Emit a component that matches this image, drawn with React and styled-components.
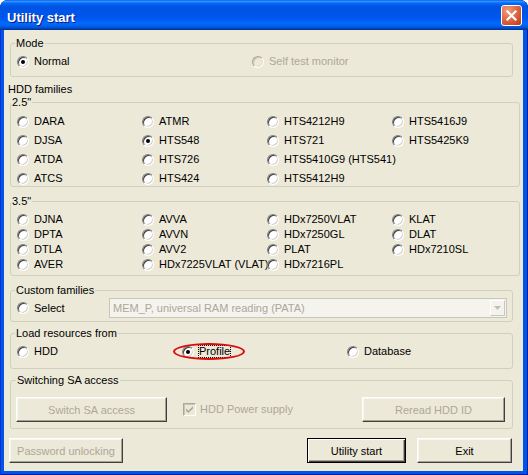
import React from 'react'
import styled, { createGlobalStyle, css } from 'styled-components'

const GlobalStyle = createGlobalStyle`
  html, body {
    margin: 0;
    padding: 0;
    background: #ffffff;
  }
  body {
    font-family: "Liberation Sans", Arial, sans-serif;
    font-size: 11px;
    color: #000;
  }
`

const family25 = [
  'DARA', 'ATMR', 'HTS4212H9', 'HTS5416J9',
  'DJSA', 'HTS548', 'HTS721', 'HTS5425K9',
  'ATDA', 'HTS726', 'HTS5410G9 (HTS541)', null,
  'ATCS', 'HTS424', 'HTS5412H9', null,
]

const family35 = [
  'DJNA', 'AVVA', 'HDx7250VLAT', 'KLAT',
  'DPTA', 'AVVN', 'HDx7250GL', 'DLAT',
  'DTLA', 'AVV2', 'PLAT', 'HDx7210SL',
  'AVER', 'HDx7225VLAT (VLAT)', 'HDx7216PL', null,
]

const Radio = ({ label, checked, disabled, focused, children }) => (
  <Item $disabled={disabled}>
    <RadioCircle $checked={checked} $disabled={disabled} />
    <Label $focused={focused}>{label}</Label>
    {children}
  </Item>
)

const App = () => {
  return (
    <>
      <GlobalStyle />
      <Window>
        <TitleBar>
          <Title>Utility start</Title>
          <CloseBtn>
            <svg width="21" height="21" viewBox="0 0 21 21">
              <path d="M6.5 6.5 L14.5 14.5 M14.5 6.5 L6.5 14.5" stroke="#fff" strokeWidth="2.2" strokeLinecap="square" />
            </svg>
          </CloseBtn>
        </TitleBar>

        <Client>
          <Group $w={503}>
            <Legend $ml={4}>Mode</Legend>
            <GroupBody $pad="5px 0 8px 6px">
              <Grid $cols="235px 235px" $gap={0}>
                <Radio label="Normal" checked />
                <Radio label="Self test monitor" disabled />
              </Grid>
            </GroupBody>
          </Group>

          <Caption>HDD families</Caption>

          <Group $w={510}>
            <Legend $ml={0}>2.5"</Legend>
            <GroupBody $pad="6px 0 1px 6px">
              <Grid $cols="repeat(4, 125px)" $gap={6}>
                {family25.map((name, i) =>
                  name ? <Radio key={i} label={name} checked={name === 'HTS548'} /> : <span key={i} />
                )}
              </Grid>
            </GroupBody>
          </Group>

          <Group $w={510} $mt={8}>
            <Legend $ml={0}>3.5"</Legend>
            <GroupBody $pad="5px 0 4px 6px">
              <Grid $cols="repeat(4, 125px)" $gap={2}>
                {family35.map((name, i) =>
                  name ? <Radio key={i} label={name} /> : <span key={i} />
                )}
              </Grid>
            </GroupBody>
          </Group>

          <Group $w={503} $mt={8}>
            <Legend $ml={4}>Custom families</Legend>
            <GroupBody $pad="1px 5px 3px 6px">
              <Row>
                <SelectCell>
                  <Radio label="Select" />
                </SelectCell>
                <Combo>
                  <ComboText>MEM_P, universal RAM reading (PATA)</ComboText>
                  <ComboArrow>
                    <svg width="7" height="4" viewBox="0 0 7 4">
                      <path d="M0 0 H7 L3.5 4 Z" fill="#C2BFB0" />
                    </svg>
                  </ComboArrow>
                </Combo>
              </Row>
            </GroupBody>
          </Group>

          <Group $w={503} $mt={5}>
            <Legend $ml={4}>Load resources from</Legend>
            <GroupBody $pad="5px 0 10px 6px">
              <Grid $cols="165px 165px 165px" $gap={0}>
                <Radio label="HDD" />
                <Radio label="Profile" checked focused>
                  <Mark />
                </Radio>
                <Radio label="Database" />
              </Grid>
            </GroupBody>
          </Group>

          <Group $w={503} $mt={5}>
            <Legend $ml={5}>Switching SA access</Legend>
            <GroupBody $pad="10px 7px 6px 5px">
              <Row>
                <Button $w={151} disabled>Switch SA access</Button>
                <CheckItem>
                  <CheckBox>
                    <svg width="11" height="11" viewBox="0 0 11 11">
                      <path d="M2 4.5 L4.3 6.8 L9 2.2 V4.4 L4.3 9 L2 6.7 Z" fill="#ACA899" />
                    </svg>
                  </CheckBox>
                  <Label $disabled>HDD Power supply</Label>
                </CheckItem>
                <Spacer />
                <Button $w={143} disabled>Reread HDD ID</Button>
              </Row>
            </GroupBody>
          </Group>

          <Footer>
            <Button $w={114} disabled>Password unlocking</Button>
            <Spacer />
            <Button $w={99} $default>Utility start</Button>
            <Button $w={95}>Exit</Button>
          </Footer>
        </Client>
      </Window>
    </>
  )
}

const Window = styled.div`
  width: 528px;
  height: 475px;
  box-sizing: border-box;
  display: flex;
  flex-direction: column;
  background: #0055E5;
  border-radius: 8px 8px 0 0;
  padding-bottom: 4px;
  overflow: hidden;
  box-shadow: inset 1px 0 0 #0831D9, inset -1px 0 0 #001EA0, inset 0 -1px 0 #001EA0;
`
const TitleBar = styled.div`
  height: 30px;
  flex: none;
  display: flex;
  align-items: center;
  justify-content: space-between;
  padding: 0 6px 0 7px;
  box-sizing: border-box;
  border-radius: 8px 8px 0 0;
  background: linear-gradient(to bottom, #0058EE 0%, #3A93FF 4%, #288EFF 6%, #127DFF 8%, #036FFC 10%, #0262EE 14%, #0057E5 20%, #0054E3 24%, #0055EB 56%, #005BF5 66%, #026AFE 76%, #0062EF 86%, #0052D6 92%, #0040AB 96%, #003092 100%);
`
const Title = styled.span`
  font-family: "Liberation Sans", Arial, sans-serif;
  font-weight: bold;
  font-size: 13px;
  color: #ffffff;
  text-shadow: 1px 1px 0 #0A1883;
  padding-top: 4px;
`
const CloseBtn = styled.span`
  width: 21px;
  height: 21px;
  box-sizing: border-box;
  border: 1px solid #ffffff;
  border-radius: 3px;
  display: flex;
  align-items: center;
  justify-content: center;
  margin-top: 1px;
  background: radial-gradient(circle at 30% 25%, #F09B7E 0%, #E3704C 40%, #CB4A26 80%, #B53815 100%);
  svg { display: block; margin: -1px; }
`
const Client = styled.div`
  flex: 1;
  margin: 0 5px 0 4px;
  background: #ECE9D8;
  padding: 7px 0 0 6px;
  display: flex;
  flex-direction: column;
  align-items: flex-start;
`
const Group = styled.fieldset`
  margin: ${(props) => props.$mt || 0}px 0 0 0;
  width: ${(props) => props.$w}px;
  box-sizing: border-box;
  padding: 0;
  min-width: 0;
  border: 1px solid #D0D0BF;
  border-radius: 3px;
`
const Legend = styled.legend`
  margin-left: ${(props) => props.$ml}px;
  padding: 0 1px;
  line-height: 13px;
  font-size: 11px;
  color: #000;
`
const GroupBody = styled.div`
  padding: ${(props) => props.$pad};
`
const Caption = styled.div`
  margin: 6px 0 0 -2px;
  line-height: 13px;
`
const Grid = styled.div`
  display: grid;
  grid-template-columns: ${(props) => props.$cols};
  grid-auto-rows: 13px;
  row-gap: ${(props) => props.$gap}px;
`
const Row = styled.div`
  display: flex;
  align-items: center;
`
const Item = styled.div`
  position: relative;
  display: flex;
  align-items: center;
  gap: 5px;
  height: 13px;
  white-space: nowrap;
  color: ${(props) => (props.$disabled ? '#ACA899' : '#000')};
`
const Label = styled.span`
  line-height: 13px;
  color: ${(props) => (props.$disabled ? '#ACA899' : 'inherit')};
  ${(props) =>
    props.$focused &&
    css`
      outline: 1px dotted #000;
      outline-offset: -1px;
      padding: 0 1px;
      margin-left: -1px;
    `}
`
const RadioCircle = styled.span`
  flex: none;
  position: relative;
  width: 12px;
  height: 12px;
  box-sizing: border-box;
  border-radius: 50%;
  border: 1px solid;
  border-color: ${(props) => (props.$disabled ? '#ACA899 #fff #fff #ACA899' : '#808080 #fff #fff #808080')};
  box-shadow: ${(props) =>
    props.$disabled
      ? 'inset 1px 1px 0 #C8C5B6, inset -1px -1px 0 #E2DFD0'
      : 'inset 1px 1px 0 #404040, inset -1px -1px 0 #D4D0C8'};
  background: ${(props) => (props.$disabled ? '#ECE9D8' : '#ffffff')};
  &::after {
    content: '';
    display: ${(props) => (props.$checked ? 'block' : 'none')};
    position: absolute;
    left: 3px;
    top: 3px;
    width: 4px;
    height: 4px;
    border-radius: 50%;
    background: #000;
  }
`
const Mark = styled.span`
  position: absolute;
  left: -9px;
  top: -2px;
  width: 72px;
  height: 17px;
  box-sizing: border-box;
  border: 2px solid #DC0A0A;
  border-radius: 50%;
  pointer-events: none;
`
const SelectCell = styled.div`
  width: 92px;
  flex: none;
`
const Combo = styled.div`
  width: 398px;
  height: 20px;
  box-sizing: border-box;
  border: 1px solid #C9C7BA;
  background: #F4F3EE;
  display: flex;
  align-items: center;
`
const ComboText = styled.span`
  flex: 1;
  padding-left: 3px;
  color: #ACA899;
  white-space: nowrap;
`
const ComboArrow = styled.span`
  width: 15px;
  height: 16px;
  margin-right: 1px;
  box-sizing: border-box;
  display: flex;
  align-items: center;
  justify-content: center;
  background: #F4F3EE;
  border: 1px solid;
  border-color: #fff #C9C7BA #C9C7BA #fff;
`
const Button = styled.button`
  width: ${(props) => props.$w}px;
  height: 25px;
  flex: none;
  box-sizing: border-box;
  padding: 0;
  font-family: "Liberation Sans", Arial, sans-serif;
  font-size: 11px;
  color: ${(props) => (props.disabled ? '#ACA899' : '#000')};
  background: #ECE9D8;
  border: 1px solid;
  border-color: #ffffff #404040 #404040 #ffffff;
  box-shadow: inset -1px -1px 0 #A6A394, inset 1px 1px 0 #F7F6EF;
  ${(props) =>
    props.$default &&
    css`
      border-color: #000;
      box-shadow: inset 1px 1px 0 #fff, inset -1px -1px 0 #404040, inset -2px -2px 0 #A6A394;
    `}
`
const CheckItem = styled.div`
  display: flex;
  align-items: center;
  gap: 4px;
  margin-left: 16px;
`
const CheckBox = styled.span`
  width: 13px;
  height: 13px;
  box-sizing: border-box;
  display: flex;
  align-items: center;
  justify-content: center;
  border: 1px solid;
  border-color: #ACA899 #fff #fff #ACA899;
  box-shadow: inset 1px 1px 0 #C8C5B6;
  background: #ECE9D8;
  svg { display: block; }
`
const Spacer = styled.div`
  flex: 1;
`
const Footer = styled.div`
  width: 503px;
  margin: 9px 0 0 -1px;
  display: flex;
  gap: 11px;
`

export default App
